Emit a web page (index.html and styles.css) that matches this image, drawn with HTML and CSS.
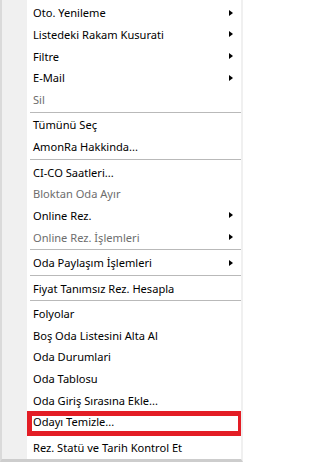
FILE: index.html
```html
<!DOCTYPE html>
<html lang="tr">
<head>
<meta charset="utf-8">
<title>Menu</title>
<link rel="stylesheet" href="styles.css">
</head>
<body>
<div class="menu">
  <div class="item">Oto. Yenileme<span class="arrow"></span></div>
  <div class="item">Listedeki Rakam Kusurati<span class="arrow"></span></div>
  <div class="item">Filtre<span class="arrow"></span></div>
  <div class="item">E-Mail<span class="arrow"></span></div>
  <div class="item disabled">Sil</div>
  <div class="sep"></div>
  <div class="item">Tümünü Seç</div>
  <div class="item">AmonRa Hakkinda...</div>
  <div class="sep"></div>
  <div class="item">CI-CO Saatleri...</div>
  <div class="item disabled">Bloktan Oda Ayır</div>
  <div class="item">Online Rez.<span class="arrow"></span></div>
  <div class="item disabled">Online Rez. İşlemleri<span class="arrow"></span></div>
  <div class="sep"></div>
  <div class="item">Oda Paylaşım İşlemleri<span class="arrow"></span></div>
  <div class="sep"></div>
  <div class="item">Fiyat Tanımsız Rez. Hesapla</div>
  <div class="sep"></div>
  <div class="item">Folyolar</div>
  <div class="item">Boş Oda Listesini Alta Al</div>
  <div class="item">Oda Durumlari</div>
  <div class="item">Oda Tablosu</div>
  <div class="item">Oda Giriş Sırasına Ekle...</div>
  <div class="item marked">Odayı Temizle...</div>
  <div class="item last">Rez. Statü ve Tarih Kontrol Et</div>
</div>
</body>
</html>
```
FILE: styles.css
```css
html, body {
  margin: 0;
  padding: 0;
  background: #ffffff;
}

.menu {
  box-sizing: border-box;
  width: 243px;
  height: 462px;
  padding-top: 2px;
  background: linear-gradient(to right, #f0f0f0 25px, #ffffff 25px);
  border-left: 2px solid #dadada;
  border-right: 2px solid #f0f0f0;
  border-bottom: 3px solid #cdcdcd;
  font-family: "Noto Sans", "Open Sans", sans-serif;
  font-size: 11.1px;
  color: #000000;
  overflow: hidden;
}

.item {
  position: relative;
  display: flex;
  align-items: center;
  height: 21.65px;
  padding-left: 31px;
  padding-right: 8px;
  white-space: nowrap;
}

.item.disabled {
  color: #6d6d6d;
}

.item.last {
  margin-top: 4px;
}

.arrow {
  margin-left: auto;
  width: 0;
  height: 0;
  border-left: 4px solid #000000;
  border-top: 3.5px solid transparent;
  border-bottom: 3.5px solid transparent;
}

.sep {
  display: flex;
  align-items: center;
  height: 3.9px;
  margin-left: 28px;
}

.sep::before {
  content: "";
  flex: 1;
  border-top: 1px solid #b9b9b9;
}

.item.marked::after {
  content: "";
  position: absolute;
  top: 0;
  left: 25px;
  right: -2px;
  height: 25px;
  box-sizing: border-box;
  border: 5px solid #e31d25;
}
```
